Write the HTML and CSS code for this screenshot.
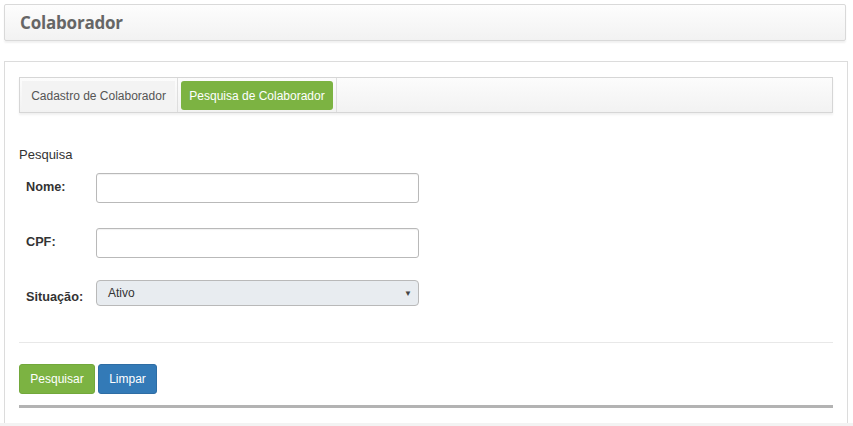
FILE: index.html
```html
<!DOCTYPE html>
<html lang="pt">
<head>
<meta charset="utf-8">
<title>Colaborador</title>
<link rel="stylesheet" href="styles.css">
</head>
<body>
<div class="page">
  <div class="header"><h1 class="title">Colaborador</h1></div>
  <div class="panel">
    <div class="tabs">
      <div class="tab">Cadastro de Colaborador</div>
      <div class="sep"></div>
      <div class="tab active">Pesquisa de Colaborador</div>
      <div class="sep"></div>
    </div>
    <div class="section-title">Pesquisa</div>
    <div class="form">
      <div class="row row-nome">
        <label class="lbl">Nome:</label>
        <input class="field" type="text">
      </div>
      <div class="row row-cpf">
        <label class="lbl">CPF:</label>
        <input class="field" type="text">
      </div>
      <div class="row row-sit">
        <label class="lbl">Situação:</label>
        <div class="select"><span>Ativo</span><span class="caret">▼</span></div>
      </div>
    </div>
    <div class="divider"></div>
    <div class="actions">
      <button class="btn btn-green">Pesquisar</button>
      <button class="btn btn-blue">Limpar</button>
    </div>
    <div class="thick"></div>
  </div>
</div>
</body>
</html>
```
FILE: styles.css
```css
html { background: #f3f3f3; }
body {
  margin: 0;
  font-family: "Liberation Sans", Arial, sans-serif;
  font-size: 12px;
  color: #333;
}
.page {
  background: #fff;
  padding: 4px 5px 1px 4px;
  height: 418px;
}
.header {
  height: 35px;
  border: 1px solid #d9d9d9;
  border-radius: 2px;
  background: linear-gradient(#fdfdfd, #f2f2f2);
  box-shadow: 0 2px 2px rgba(0,0,0,0.06);
  display: flex;
  align-items: center;
  padding-left: 15px;
  margin-right: 2px;
}
.title {
  margin: 0;
  font-family: "Open Sans", sans-serif;
  font-size: 17px;
  font-weight: 700;
  color: #666;
  letter-spacing: -0.2px;
}
.panel {
  margin-top: 20px;
  border: 1px solid #dcdcdc;
  height: 360px;
  padding: 15px 14px 0 14px;
}
.tabs {
  border: 1px solid #d6d6d6;
  background: linear-gradient(#fcfcfc, #f2f2f2);
  box-shadow: 0 2px 2px rgba(0,0,0,0.06);
  display: flex;
  align-items: flex-start;
  padding: 2px 0 0 2px;
  box-sizing: content-box;
  height: 32px;
}
.tab {
  display: flex;
  align-items: center;
  justify-content: center;
  white-space: nowrap;
  box-sizing: border-box;
  width: 153px;
  height: 29px;
  margin-top: 1px;
  background: #f3f3f3;
  color: #555;
}
.tab.active {
  width: 152px;
  background: #7cb342;
  color: #fff;
  border-radius: 3px;
  margin-left: 3px;
  margin-right: 3px;
}
.sep {
  width: 1px;
  height: 34px;
  margin-top: -2px;
  background: #dedede;
  margin-left: 2px;
}
.tab.active + .sep { margin-left: 0; }
.section-title {
  margin-top: 34px;
  font-size: 13px;
  color: #333;
  line-height: 16px;
}
.form { padding-left: 7px; }
.row {
  display: flex;
  align-items: center;
}
.row-nome { margin-top: 10px; }
.row-cpf { margin-top: 25px; }
.row-sit { margin-top: 22px; }
.lbl {
  width: 70px;
  font-weight: 700;
  font-size: 12.7px;
  color: #333;
}
.row-nome .lbl, .row-cpf .lbl { position: relative; top: -1px; }
.row-sit .lbl { position: relative; top: 4px; }
.field {
  width: 323px;
  height: 30px;
  box-sizing: border-box;
  border: 1px solid #b9b9b9;
  border-radius: 3px;
  box-shadow: inset 0 1px 1px rgba(0,0,0,0.06);
  margin: 0;
  padding: 0 8px;
  font: inherit;
}
.select {
  width: 323px;
  height: 26px;
  box-sizing: border-box;
  border: 1px solid #b9b9b9;
  border-radius: 4px;
  background: #e8ecf0;
  display: flex;
  align-items: center;
  justify-content: space-between;
  padding: 0 6px 0 11px;
  color: #333;
}
.caret { font-size: 8px; color: #444; }
.divider {
  margin-top: 36px;
  height: 1px;
  background: #e8e8e8;
}
.actions {
  margin-top: 21px;
  display: flex;
  gap: 3px;
}
.btn {
  height: 30px;
  border-radius: 3px;
  color: #fff;
  font-family: "Liberation Sans", Arial, sans-serif;
  font-size: 12px;
  padding: 0;
  margin: 0;
}
.btn-green { background: #7cb342; border: 1px solid #72a83b; width: 76px; }
.btn-blue { background: #337ab7; border: 1px solid #2e6da4; width: 59px; }
.thick {
  margin-top: 11px;
  height: 3px;
  background: #b3b3b3;
}
```
